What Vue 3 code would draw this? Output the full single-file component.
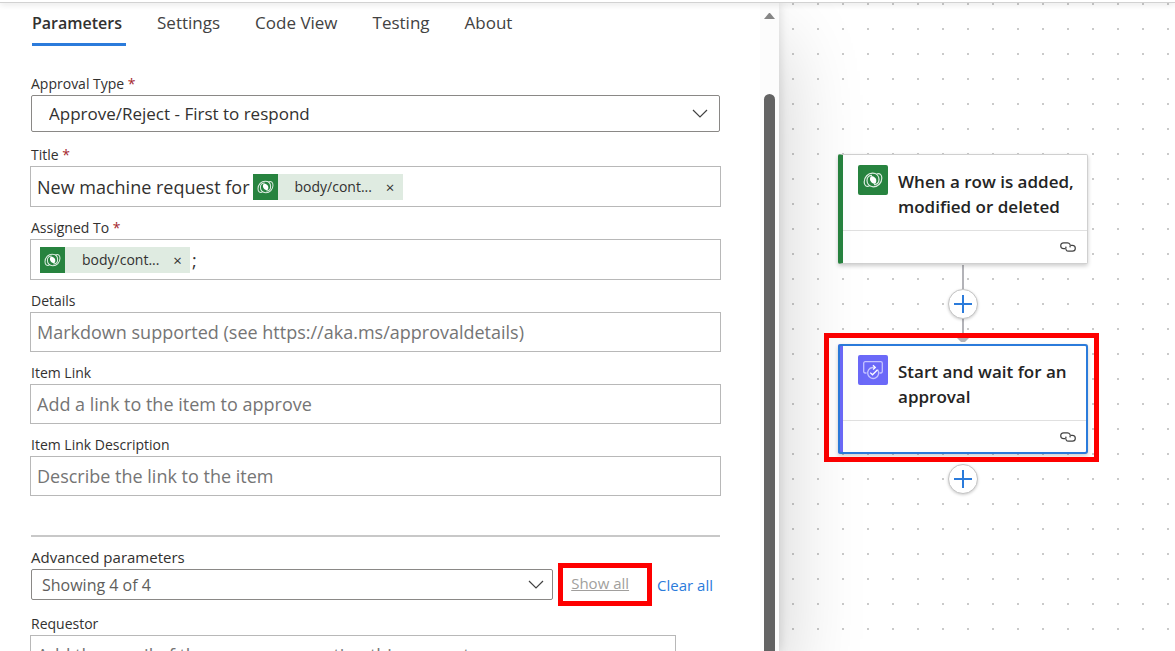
<script setup>
import { ref } from 'vue'

const tabs = ['Parameters', 'Settings', 'Code View', 'Testing', 'About']
const active = ref('Parameters')
const titleText = ref('New machine request for')
const assignedText = ref(';')
const plainFields = [
  { id: 'details', label: 'Details', placeholder: 'Markdown supported (see https://aka.ms/approvaldetails)' },
  { id: 'item-link', label: 'Item Link', placeholder: 'Add a link to the item to approve' },
  { id: 'item-desc', label: 'Item Link Description', placeholder: 'Describe the link to the item' },
]
</script>

<template>
  <div class="app">
    <svg class="defs" aria-hidden="true">
      <symbol id="swirl" viewBox="0 0 20 16">
        <path class="ring" d="M6.500 14C3 15.200 1.200 13.200 1.200 10C1.200 5 5 1.200 9.600 1.200C13.600 1.200 16 4 16 7.600C16 10.800 14 12.600 11 12.600" />
        <path class="ring" d="M13.500 2C17 .8 18.800 2.800 18.800 6C18.800 11 15 14.800 10.400 14.800C6.400 14.800 4 12 4 8.400C4 5.200 6 3.400 9 3.400" />
        <path class="core" d="M8 4.200C6.600 5.600 6.600 8 8 9.800C9 11.200 10.400 11.800 12 11.800C13.600 10.400 13.800 8 12.600 6.200C11.400 4.600 9.800 4 8 4.200Z" />
      </symbol>
      <symbol id="chain" viewBox="0 0 16 10">
        <path d="M5 6.600H3.600A2.900 2.900 0 0 1 3.600 .8H7.400A2.900 2.900 0 0 1 9.800 5.300" />
        <path d="M11 3.400H12.400A2.900 2.900 0 0 1 12.400 9.200H8.600A2.900 2.900 0 0 1 6.200 4.700" />
      </symbol>
    </svg>
    <header class="topbar"></header>
    <div class="workspace">
      <section class="panel">
        <div class="content">
          <nav class="tabs" role="tablist">
            <button
              v-for="t in tabs"
              :key="t"
              class="tab"
              :class="{ active: t === active }"
              role="tab"
              :aria-selected="t === active"
              @click="active = t"
            >{{ t }}</button>
          </nav>

          <form class="form" @submit.prevent>
            <div class="row first">
              <label class="label" for="approval-type">Approval Type <span class="req">*</span></label>
              <div class="select-wrap main">
                <select id="approval-type" class="select">
                  <option>Approve/Reject - First to respond</option>
                </select>
                <svg class="chevron" viewBox="0 0 16 9" aria-hidden="true"><path d="M1 1l7 7 7-7" /></svg>
              </div>
            </div>

            <div class="row">
              <label class="label" for="title">Title <span class="req">*</span></label>
              <div class="box tokens">
                <input id="title" v-model="titleText" class="inline-input" />
                <span class="token">
                  <span class="token-icon"><svg aria-hidden="true"><use href="#swirl" /></svg></span>
                  <span class="token-text">body/cont...</span>
                  <button class="token-x" type="button" aria-label="Remove token">×</button>
                </span>
              </div>
            </div>

            <div class="row">
              <label class="label" for="assigned">Assigned To <span class="req">*</span></label>
              <div class="box tokens lead">
                <span class="token">
                  <span class="token-icon"><svg aria-hidden="true"><use href="#swirl" /></svg></span>
                  <span class="token-text">body/cont...</span>
                  <button class="token-x" type="button" aria-label="Remove token">×</button>
                </span>
                <input id="assigned" v-model="assignedText" class="inline-input" />
              </div>
            </div>

            <div v-for="f in plainFields" :key="f.id" class="row">
              <label class="label" :for="f.id">{{ f.label }}</label>
              <input :id="f.id" class="box" :placeholder="f.placeholder" />
            </div>

            <hr class="rule" />

            <div class="row">
              <label class="label wide" for="advanced">Advanced parameters</label>
              <div class="advanced">
                <div class="select-wrap small">
                  <select id="advanced" class="select">
                    <option>Showing 4 of 4</option>
                  </select>
                  <svg class="chevron" viewBox="0 0 16 9" aria-hidden="true"><path d="M1 1l7 7 7-7" /></svg>
                </div>
                <div class="marked">
                  <button class="link muted" type="button">Show all</button>
                </div>
                <button class="link" type="button">Clear all</button>
              </div>
            </div>

            <div class="row requestor">
              <label class="label" for="requestor">Requestor</label>
              <input id="requestor" class="box" placeholder="Add the email of the person requesting this request" />
            </div>
          </form>
        </div>
        <div class="scrollbar" aria-hidden="true">
          <svg class="scroll-up" viewBox="0 0 11 6"><path d="M0 6L5 0h1l5 6z" /></svg>
          <div class="thumb"></div>
        </div>
      </section>

      <main class="canvas">
        <svg class="edge" viewBox="0 0 14 80" aria-hidden="true">
          <path class="wire" d="M7 0V75" />
          <path class="arrow" d="M0 72h14l-5 5H5z" />
        </svg>

        <article class="node trigger">
          <div class="node-head">
            <span class="node-icon"><svg aria-hidden="true"><use href="#swirl" /></svg></span>
            <h2>When a row is added, modified or deleted</h2>
          </div>
          <div class="node-foot"><svg class="chain" aria-hidden="true"><use href="#chain" /></svg></div>
        </article>

        <article class="node action">
          <div class="node-head">
            <span class="node-icon">
              <svg viewBox="0 0 20 20" aria-hidden="true">
                <path class="dim" d="M3.500 13H2A1.500 1.500 0 0 1 .7 11.500V3.200A1.500 1.500 0 0 1 2.200 1.700H17.800A1.500 1.500 0 0 1 19.300 3.200V11.500A1.500 1.500 0 0 1 18 13H16.500" />
                <path class="dim" d="M14.600 9.700A5.500 5.500 0 1 1 9.500 7.500H11.500" />
                <path d="M10 5.200L12.300 7.500L10 9.500" />
                <path d="M7.200 12.600L9.500 14.800L14.500 9.800" />
              </svg>
            </span>
            <h2>Start and wait for an approval</h2>
          </div>
          <div class="node-foot"><svg class="chain" aria-hidden="true"><use href="#chain" /></svg></div>
        </article>
        <div class="highlight"></div>

        <button class="add between" aria-label="Insert a step">
          <svg viewBox="0 0 18 18" aria-hidden="true"><path d="M9 0v18M0 9h18" /></svg>
        </button>
        <button class="add after" aria-label="Add a step at the end">
          <svg viewBox="0 0 18 18" aria-hidden="true"><path d="M9 0v18M0 9h18" /></svg>
        </button>
      </main>
    </div>
  </div>
</template>

<style>
body { margin: 0; overflow: hidden; }
</style>

<style scoped>
.app {
  height: 100vh;
  display: flex;
  flex-direction: column;
  overflow: hidden;
  background: #fff;
  color: #323130;
  font-family: "Segoe UI", "Open Sans", "Noto Sans", sans-serif;
}
.app *, .app *::before { box-sizing: border-box; }
.defs { position: absolute; width: 0; height: 0; }
.ring { fill: none; stroke: #fff; stroke-width: 1.200; stroke-opacity: 0.850; }
.core { fill: #fff; }
button, input, select { font-family: inherit; color: inherit; margin: 0; }
button { background: none; border: 0; padding: 0; cursor: pointer; }

.topbar {
  flex: none;
  height: 3px;
  z-index: 3;
  background: #fff;
  border-bottom: 1px solid #d2d2d2;
  box-shadow: 0 1px 6px rgba(0, 0, 0, 0.16);
}
.workspace { flex: 1; min-height: 0; display: flex; }

.panel {
  flex: 0 0 66.3%;
  display: flex;
  z-index: 2;
  background: #fff;
  box-shadow: 0 0 10px rgba(0, 0, 0, 0.14), 0 40px 80px rgba(0, 0, 0, 0.2);
}
.content { flex: 1; min-width: 0; overflow: hidden; padding: 0 39px 0 30px; }

.tabs { display: flex; gap: 31px; padding-left: 2px; }
.tab {
  height: 43px;
  padding: 0 4px 0 0;
  border-bottom: 3px solid transparent;
  font-size: 17px;
  line-height: 24px;
  color: #424242;
}
.tab.active { font-size: 16px; font-weight: 600; color: #323130; border-bottom-color: #2b7bdb; }

.form { display: flex; flex-direction: column; gap: 12px; padding-top: 29px; }
.row { display: flex; flex-direction: column; }
.row.first { margin-bottom: 2px; }
.label { height: 20px; padding-left: 1px; font-size: 14px; line-height: 17px; }
.label.wide { font-size: 15px; line-height: 16px; }
.req { color: #a4262c; }

.box {
  width: 100%;
  height: 40px;
  padding: 0 6px;
  border: 1px solid #b8b8b8;
  background: #fff;
  font-size: 18px;
}
.box::placeholder { color: #757575; opacity: 1; }
.tokens { display: flex; align-items: center; gap: 3px; height: 41px; }
.tokens.lead { gap: 2px; padding-left: 9px; }
.inline-input { field-sizing: content; border: 0; padding: 0; background: none; font-size: 18px; line-height: 24px; outline: 0; }
.token { display: flex; align-items: center; width: 150px; height: 26px; background: #dfebe1; }
.token-icon { display: flex; align-items: center; justify-content: center; width: 25px; height: 26px; background: #27833f; }
.token-icon svg { width: 17px; height: 14px; }
.token-text { flex: 1; padding-left: 17px; font-size: 14px; }
.token-x { width: 25px; font-size: 15px; line-height: 20px; }

.select-wrap { display: grid; align-items: center; }
.select-wrap > * { grid-area: 1 / 1; }
.select { appearance: none; width: 100%; border: 1px solid #8a8886; border-radius: 2px; background: #fff; }
.chevron { justify-self: end; width: 16px; height: 9px; fill: none; stroke: #424242; stroke-width: 1.200; pointer-events: none; }
.main { margin: 0 1px; }
.main .select { height: 37px; padding: 0 17px; font-size: 17px; }
.main .chevron { margin-right: 12px; }
.small { flex: 1; margin-left: 1px; }
.small .select { height: 31px; padding: 0 10px; font-size: 16px; color: #605e5c; }
.small .chevron { margin-right: 9px; }
.rule { width: calc(100% - 2px); height: 2px; margin: 27px 1px 0; border: 0; background: #c8c8c8; }
.advanced { display: flex; align-items: center; height: 31px; padding-right: 8px; }
.marked {
  display: flex;
  align-items: center;
  height: 43px;
  margin: 0 5px;
  padding: 0 18px 3px 8px;
  border: 5px solid #fe0000;
}
.link { font-size: 15px; color: #2b7bdb; white-space: nowrap; }
.link.muted { color: #a19f9d; text-decoration: underline; }
.requestor { margin-top: 3px; padding-right: 45px; }

.scrollbar { flex: none; width: 19px; display: flex; flex-direction: column; align-items: center; padding: 10px 0 0; background: #fcfcfc; }
.scroll-up { width: 11px; height: 6px; fill: #858585; }
.thumb { flex: 1; width: 11px; margin-top: 75px; border-radius: 6px 6px 0 0; background: #636363; }

.canvas {
  flex: 1;
  position: relative;
  overflow: hidden;
  background-color: #fff;
  background-image: radial-gradient(circle at 1px 1px, #cacaca 1px, transparent 1px);
  background-size: 25px 25px;
  background-position: 13px 0;
}
.node {
  position: absolute;
  left: 59px;
  display: flex;
  flex-direction: column;
  width: 250px;
  height: 110px;
  border: 1px solid #d0d0d0;
  border-left: 5px solid #27833f;
  border-radius: 2px;
  background: #fff;
  box-shadow: 0 2px 4px rgba(0, 0, 0, 0.2);
}
.trigger { top: 151px; }
.action { top: 341px; border-left-color: #6b69f8; }
.action::before { content: ""; position: absolute; inset: -1px -1px -1px -5px; border: 2px solid #2b7bdb; border-radius: 3px; }
.node-head { flex: 1; display: flex; gap: 10px; padding: 10px 8px 0 15px; }
.node-icon { flex: none; display: flex; align-items: center; justify-content: center; width: 30px; height: 30px; border-radius: 2px; background: #27833f; }
.trigger .node-icon svg { width: 20px; height: 16px; }
.action .node-icon { background: #6b69f8; }
.action .node-icon svg { width: 20px; height: 20px; fill: none; stroke: #fff; stroke-width: 1.300; }
.action .node-icon .dim { stroke: #c5c4ff; }
.node h2 { margin: 4px 0 0; font-size: 17px; font-weight: 600; line-height: 25px; color: #242424; }
.node-foot { display: flex; align-items: center; justify-content: flex-end; height: 33px; padding-right: 11px; border-top: 1px solid #e0e0e0; }
.chain { width: 16px; height: 10px; fill: none; stroke: #424242; stroke-width: 1.200; }
.highlight { position: absolute; left: 45px; top: 330px; width: 275px; height: 129px; border: 5px solid #fe0000; }
.edge { position: absolute; left: 177px; top: 262px; width: 14px; height: 80px; }
.wire { stroke: #b3b3b8; stroke-width: 2; }
.arrow { fill: #b3b3b8; }
.add {
  position: absolute;
  left: 169px;
  display: flex;
  align-items: center;
  justify-content: center;
  width: 30px;
  height: 30px;
  border: 1px solid #c4c4c4;
  border-radius: 50%;
  background: #fff;
  box-shadow: 0 1px 3px rgba(0, 0, 0, 0.2);
}
.add svg { width: 18px; height: 18px; stroke: #2b7bdb; stroke-width: 2; }
.between { top: 286px; }
.after { top: 461px; }
</style>
